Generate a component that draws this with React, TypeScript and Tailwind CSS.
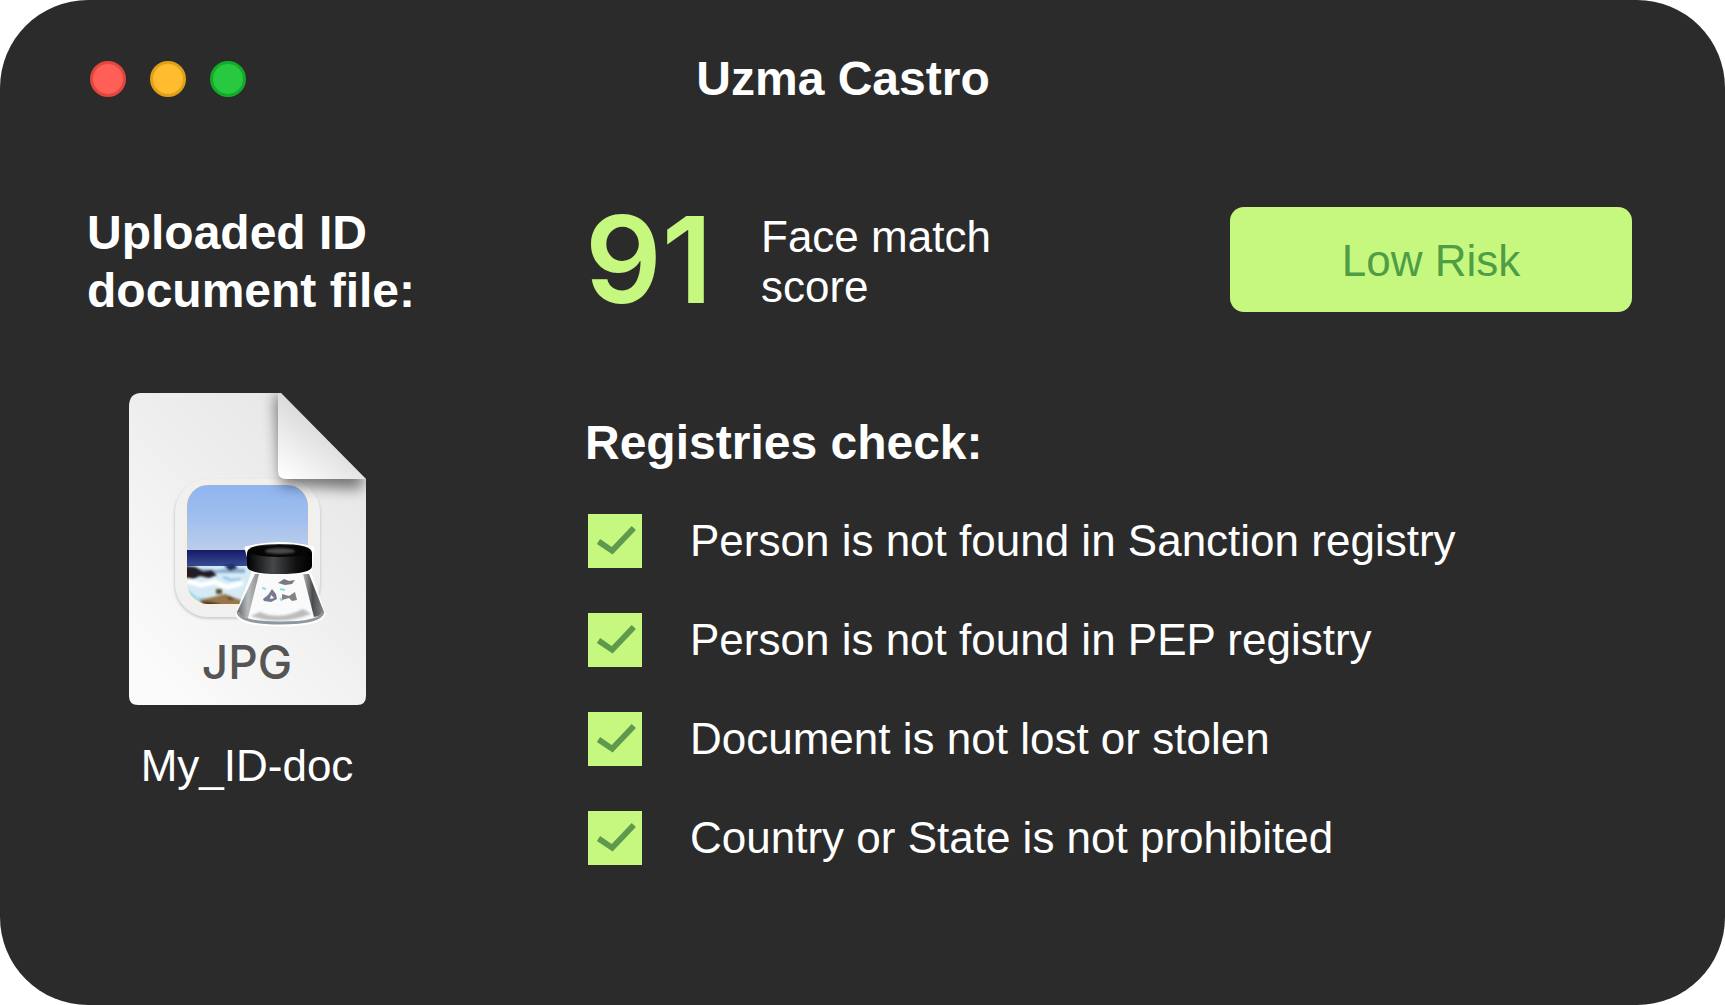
import { useState } from "react";

type Registry = {
  id: string;
  label: string;
};

const registries: Registry[] = [
  { id: "sanction", label: "Person is not found in Sanction registry" },
  { id: "pep", label: "Person is not found in PEP registry" },
  { id: "document", label: "Document is not lost or stolen" },
  { id: "country", label: "Country or State is not prohibited" },
];

const windowButtons = [
  { name: "Close", className: "bg-[#ff5f57] border-[#e2463f]" },
  { name: "Minimize", className: "bg-[#febc2e] border-[#e1a116]" },
  { name: "Zoom", className: "bg-[#28c840] border-[#12ac28]" },
];

function JpgFileIcon() {
  return (
    <svg viewBox="0 0 237 312" className="w-[237px] h-[312px]" role="img" aria-label="JPG file">
      <defs>
        <linearGradient id="page" x1="0.9" y1="0.1" x2="0.2" y2="1">
          <stop offset="0" stopColor="#e6e6e6" />
          <stop offset="0.45" stopColor="#efefef" />
          <stop offset="1" stopColor="#fbfbfb" />
        </linearGradient>
        <linearGradient id="fold" x1="0.05" y1="1" x2="0.5" y2="0.4">
          <stop offset="0" stopColor="#ffffff" />
          <stop offset="1" stopColor="#dcdcdc" />
        </linearGradient>
        <linearGradient id="sky" x1="0" y1="0" x2="0" y2="1">
          <stop offset="0" stopColor="#8fb5ef" />
          <stop offset="0.5" stopColor="#a0beee" />
          <stop offset="1" stopColor="#bccfe9" />
        </linearGradient>
        <linearGradient id="sea" x1="0" y1="0" x2="0" y2="1">
          <stop offset="0" stopColor="#171a66" />
          <stop offset="1" stopColor="#38539a" />
        </linearGradient>
        <linearGradient id="cap" x1="0" y1="0" x2="1" y2="0">
          <stop offset="0" stopColor="#000000" />
          <stop offset="0.4" stopColor="#46484b" />
          <stop offset="0.75" stopColor="#101010" />
          <stop offset="1" stopColor="#000000" />
        </linearGradient>
        <linearGradient id="glassLeft" x1="0" y1="0" x2="1" y2="0">
          <stop offset="0" stopColor="#5f6266" />
          <stop offset="0.5" stopColor="#b9bcbf" />
          <stop offset="1" stopColor="#8d9092" />
        </linearGradient>
        <linearGradient id="glassRight" x1="0" y1="0" x2="1" y2="0">
          <stop offset="0" stopColor="#b5b5b5" />
          <stop offset="0.45" stopColor="#4a4c4e" />
          <stop offset="1" stopColor="#86898c" />
        </linearGradient>
        <clipPath id="pageClip">
          <path d="M12 0H152L237 86V303Q237 312 228 312H9Q0 312 0 303V14Q0 0 12 0Z" />
        </clipPath>
        <clipPath id="photoClip">
          <rect x="58" y="92" width="121" height="119" rx="21" />
        </clipPath>
        <filter id="blurLarge" x="-50%" y="-50%" width="200%" height="200%">
          <feGaussianBlur stdDeviation="7" />
        </filter>
        <filter id="blurSmall" x="-20%" y="-20%" width="140%" height="140%">
          <feGaussianBlur stdDeviation="1.2" />
        </filter>
      </defs>

      <g clipPath="url(#pageClip)">
        <rect width="237" height="312" fill="url(#page)" />

        {/* Photo frame */}
        <rect x="45" y="87" width="147" height="139" rx="34" fill="#d0d0d0" filter="url(#blurSmall)" />
        <rect x="46" y="86" width="145" height="138" rx="33" fill="#f0f0f0" />
        <rect x="55" y="89" width="127" height="125" rx="24" fill="#f7efe3" filter="url(#blurSmall)" />

        {/* Photo */}
        <g clipPath="url(#photoClip)">
          <rect x="58" y="92" width="121" height="66" fill="url(#sky)" />
          <rect x="58" y="157" width="121" height="18" fill="url(#sea)" />
          <rect x="58" y="173" width="121" height="40" fill="#d5eaf5" />
          <g filter="url(#blurSmall)">
            <path d="M58 173l14 3 16 1 14-2 14 1v4H58z" fill="#8fabcf" />
            <path d="M56 173l10 1 8 4 9-1 5 5-8 3-9-2-7 3-8-1z" fill="#241b25" />
            <path d="M95 173l9-2 5 4-8 3z" fill="#232b5c" />
            <path d="M58 188l14 4 14-3 12 5 16-4" stroke="#ffffff" strokeWidth="5" fill="none" />
            <path d="M58 198l10 8 20 1 12-4" stroke="#96dbe3" strokeWidth="3" fill="none" />
            <path d="M94 184l8 3 10-1" stroke="#8dbfe5" strokeWidth="2" fill="none" />
            <path d="M87 196h6v5h-6z" fill="#5d5534" />
            <path d="M70 207l14-3 12-3 10 4 6 2v6H74z" fill="#98774b" />
            <path d="M72 208l12 1 10 3-16 2zM98 203l8 3-6 1z" fill="#4c3625" />
          </g>
        </g>

        {/* Folded corner with its shadow */}
        <path d="M146 4L152 92L230 96L237 86L152 0Z" fill="#000000" opacity="0.5" filter="url(#blurLarge)" />
        <path d="M152 0L237 86H157Q149 86 149 78V0Z" fill="url(#fold)" />

        {/* Loupe */}
        <path d="M124 180L108 221Q110 232 151 232Q192 232 195 221L181 180L184 155Q150 146 117 155Z" fill="#ffffff" stroke="#ffffff" strokeWidth="3" strokeLinejoin="round" />
        <path d="M124 181L108 219Q108 231 151 231Q195 231 195 219L179 181Z" fill="#fafafa" />
        <path d="M126 181L108 219Q108 223 119 225L130 181Z" fill="url(#glassLeft)" />
        <path d="M174 181L185 224Q195 222 195 219L180 181Z" fill="url(#glassRight)" />
        <path d="M109 219Q111 230 151 230Q192 230 194 219" stroke="#8e979d" strokeWidth="3" fill="none" />
        <path d="M131 219Q151 228 174 216L182 221Q151 233 122 223Z" fill="#bcbcbc" filter="url(#blurSmall)" />
        <g>
          <path d="M149 190l6-4 5 2 6-1-3 4-7 1z" fill="#777985" />
          <path d="M134 206l5-4 4-6 4 5 1 5-6 3-7-1z" fill="#777b91" />
          <path d="M142 202l3 3-4 1z" fill="#ffffff" />
          <path d="M153 201l7 2 6-4 2 8-5 1-3-3-7 2z" fill="#858083" />
          <path d="M133 195l4 1M151 196l5 1M151 205l2 3" stroke="#8cdde0" strokeWidth="2" />
        </g>
        <path d="M118 160Q118 151 150 151Q183 151 183 160V173Q183 181 150 181Q118 181 118 173Z" fill="url(#cap)" />
        <ellipse cx="150" cy="158" rx="31" ry="6" fill="#050505" />
        <ellipse cx="151" cy="158" rx="15" ry="3" fill="#4a4a4a" filter="url(#blurSmall)" />

        <text x="118" y="286" textAnchor="middle" fill="#555555" className="font-['Inter',sans-serif] text-[46px] font-medium">
          JPG
        </text>
      </g>
    </svg>
  );
}

function RegistryCheck({ id, label }: Registry) {
  const [checked, setChecked] = useState(true);

  return (
    <li className="flex items-center gap-12">
      <span className="grid shrink-0">
        <input
          id={id}
          type="checkbox"
          checked={checked}
          onChange={() => setChecked(!checked)}
          className="col-start-1 row-start-1 size-[54px] appearance-none bg-[#c6f87f]"
        />
        {checked && (
          <svg viewBox="0 0 54 54" className="col-start-1 row-start-1 size-[54px] pointer-events-none" fill="none" aria-hidden="true">
            <path d="M10.5 27.5L24.2 36.8L45.8 14" stroke="#5f994d" strokeWidth="5.8" />
          </svg>
        )}
      </span>
      <label htmlFor={id}>{label}</label>
    </li>
  );
}

export default function App() {
  return (
    <div className="min-h-screen bg-white">
      <main className="min-h-screen rounded-[88px] bg-[#2b2b2b] pt-[50px] pb-20 pl-[87px] pr-[93px] font-['Liberation_Sans',Arial,sans-serif] text-[44px] leading-[50px] text-white">
        {/* Title bar */}
        <header className="flex items-center">
          <div className="flex gap-6 pl-[3px]">
            {windowButtons.map((button) => (
              <button
                key={button.name}
                type="button"
                aria-label={button.name}
                className={`size-9 rounded-full border-3 ${button.className}`}
              />
            ))}
          </div>
          <h1 className="flex-1 pr-48 text-center text-[48px] leading-[58px] font-bold">Uzma Castro</h1>
        </header>

        <div className="grid grid-cols-[320px_1fr] gap-x-[178px] pt-24">
          {/* Uploaded file */}
          <section>
            <h2 className="whitespace-nowrap text-[48px] leading-[58px] font-bold">
              Uploaded ID
              <br />
              document file:
            </h2>
            <figure className="mt-[73px] flex w-[320px] flex-col items-center gap-9">
              <JpgFileIcon />
              <figcaption>My_ID-doc</figcaption>
            </figure>
          </section>

          {/* Match score and registries */}
          <section>
            <div className="flex items-center pt-[3px]">
              <p className="w-[176px] font-['Inter',sans-serif] text-[120px] leading-[105px] font-semibold text-[#c6f87f]">91</p>
              <p className="w-[240px] pt-1">Face match score</p>
              <button
                type="button"
                className="ml-auto h-[105px] w-[402px] rounded-[14px] bg-[#c6f87f] pt-[2px] text-[#4f9d45]"
              >
                Low Risk
              </button>
            </div>

            <h2 className="mt-[102px] text-[48px] leading-[58px] font-bold">Registries check:</h2>
            <ul className="mt-[42px] flex flex-col gap-[45px] pl-[3px]">
              {registries.map((registry) => (
                <RegistryCheck key={registry.id} {...registry} />
              ))}
            </ul>
          </section>
        </div>
      </main>
    </div>
  );
}
